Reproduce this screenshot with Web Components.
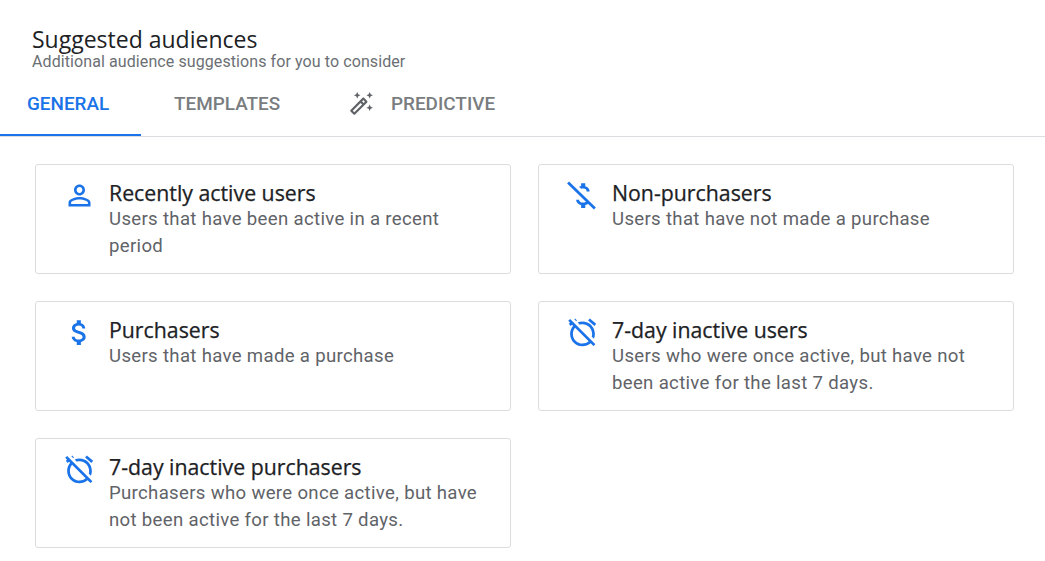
<!DOCTYPE html>
<html><head><meta charset="utf-8">
<style>
html,body{margin:0;padding:0;background:#fff;font-family:Roboto,"Liberation Sans",sans-serif}
</style></head><body>
<audience-page>
  <audience-header slot="header" title-text="Suggested audiences" sub="Additional audience suggestions for you to consider"></audience-header>
  <audience-tabs slot="tabs"></audience-tabs>
  <audience-card icon="person" heading="Recently active users">Users that have been active in a recent period</audience-card>
  <audience-card icon="moneyoff" heading="Non-purchasers">Users that have not made a purchase</audience-card>
  <audience-card icon="money" heading="Purchasers">Users that have made a purchase</audience-card>
  <audience-card icon="alarmoff" heading="7-day inactive users">Users who were once active, but have not been active for the last 7 days.</audience-card>
  <audience-card icon="alarmoff" heading="7-day inactive purchasers">Purchasers who were once active, but have not been active for the last 7 days.</audience-card>
</audience-page>
<script>
const ICONS={
person:'M12 5.9c1.16 0 2.1.94 2.1 2.1s-.94 2.1-2.1 2.1S9.9 9.16 9.9 8s.94-2.1 2.1-2.1m0 9c2.97 0 6.1 1.46 6.1 2.1v1.1H5.9V17c0-.64 3.13-2.1 6.1-2.1M12 4C9.79 4 8 5.79 8 8s1.79 4 4 4 4-1.79 4-4-1.79-4-4-4zm0 9c-2.67 0-8 1.34-8 4v3h16v-3c0-2.66-5.33-4-8-4z',
money:'M11.8 10.9c-2.27-.59-3-1.2-3-2.15 0-1.09 1.01-1.85 2.7-1.85 1.78 0 2.44.85 2.5 2.1h2.21c-.07-1.72-1.12-3.3-3.21-3.81V3h-3v2.16c-1.94.42-3.5 1.68-3.5 3.61 0 2.31 1.91 3.46 4.7 4.13 2.5.6 3 1.48 3 2.41 0 .69-.49 1.79-2.7 1.79-2.06 0-2.87-.92-2.98-2.1h-2.2c.12 2.19 1.76 3.42 3.68 3.83V21h3v-2.15c1.95-.37 3.5-1.5 3.5-3.55 0-2.84-2.43-3.81-4.7-4.4z',
moneyoff:'M12.5 6.9c1.78 0 2.44.85 2.5 2.1h2.21c-.07-1.72-1.12-3.3-3.21-3.81V3h-3v2.16c-.53.12-1.03.3-1.48.54l1.47 1.47c.41-.17.91-.27 1.51-.27zM14.92 16.19c-.34.48-1.05.91-2.42.91-2.06 0-2.87-.92-2.98-2.1h-2.2c.12 2.19 1.76 3.42 3.68 3.83V21h3v-2.15c.96-.18 1.82-.55 2.45-1.12zM2.2 1.9L.8 3.3 20.3 22.1l1.4-1.4z',
alarmoff:'M10.04 6.29C10.66 6.11 11.32 6 12 6c3.86 0 7 3.14 7 7 0 .68-.11 1.34-.29 1.96l1.56 1.56c.47-1.08.73-2.27.73-3.52 0-4.97-4.03-9-9-9-1.25 0-2.44.26-3.53.72l1.57 1.57zm7.297-4.48l4.607 3.845-1.28 1.535-4.61-3.843zM3.02 2.1L1.61 3.51l1.37 1.37-.92.77 1.28 1.54 1.06-.88.8.8C3.83 8.69 3 10.75 3 13c0 4.97 4.03 9 9 9 2.25 0 4.31-.83 5.89-2.2l2.1 2.1 1.41-1.41L3.02 2.1zM12 20c-3.86 0-7-3.14-7-7 0-1.7.61-3.26 1.62-4.47l9.85 9.85C15.26 19.39 13.7 20 12 20zM7.48 3.73l.46-.38-1.28-1.54-.6.5z',
wand:'M20 7l.94-2.06L23 4l-2.06-.94L20 1l-.94 2.06L17 4l2.06.94zM8.5 7l.94-2.06L11.5 4l-2.06-.94L8.5 1l-.94 2.06L5.5 4l2.06.94zM20 12.5l-.94 2.06-2.06.94 2.06.94.94 2.06.94-2.06L23 15.5l-2.06-.94zm-2.29-3.38l-2.83-2.83c-.2-.19-.45-.29-.71-.29-.26 0-.51.1-.71.29L2.29 17.46c-.39.39-.39 1.02 0 1.41l2.83 2.83c.2.2.45.3.71.3s.51-.1.71-.29l11.17-11.17c.39-.39.39-1.03 0-1.42zm-3.54-.7l1.41 1.41L14.41 11 13 9.59l1.17-1.17zM5.83 19.59l-1.41-1.41L11.59 11 13 12.41l-7.17 7.18z'
};
function svg(name,color,size){return `<svg width="${size}" height="${size}" viewBox="0 0 24 24" fill="${color}" aria-hidden="true"><path d="${ICONS[name]}"/></svg>`}
class Base extends HTMLElement{
  constructor(){super();this.attachShadow({mode:'open'})}
}
customElements.define('audience-page',class extends Base{
  constructor(){super();this.shadowRoot.innerHTML=`<style>
  :host{display:block;width:1045px;height:561px;overflow:hidden;background:#fff}
  .grid{display:grid;grid-template-columns:476px 476px;column-gap:27px;row-gap:27px;grid-auto-rows:110px;padding:27px 0 0 35px}
  </style><slot name="header"></slot><slot name="tabs"></slot><div class="grid"><slot></slot></div>`}
});
customElements.define('audience-header',class extends Base{
  connectedCallback(){this.shadowRoot.innerHTML=`<style>
  :host{display:block;padding:26px 0 0 32px;height:80px;box-sizing:border-box}
  .t{font:400 23px/26px "Open Sans",Roboto,sans-serif;color:#202124}
  .s{font:400 16px/18px Roboto,sans-serif;color:#6b6f74;letter-spacing:.09px;margin-top:1px}
  </style><div class="t">${this.getAttribute('title-text')}</div><div class="s">${this.getAttribute('sub')}</div>`}
});
customElements.define('audience-tabs',class extends Base{
  constructor(){super();this.shadowRoot.innerHTML=`<style>
  :host{display:flex;height:57px;box-sizing:border-box;border-bottom:1px solid #dadce0;font:500 18.9px/20px Roboto,sans-serif;color:#7a7d80}
  .tab{display:flex;align-items:center;height:56px;box-sizing:border-box;padding-bottom:9px}
  .a{width:141px;padding-left:27px;color:#1a73e8;border-bottom:2px solid #1a73e8;padding-bottom:7px}
  .b{padding-left:33px;width:207px}
  .c{gap:17px}
  svg{display:block}
  </style><div class="tab a">GENERAL</div><div class="tab b">TEMPLATES</div><div class="tab c">${svg('wand','#5f6368',26)}<span>PREDICTIVE</span></div>`}
});
customElements.define('audience-card',class extends Base{
  connectedCallback(){this.shadowRoot.innerHTML=`<style>
  :host{display:flex;box-sizing:border-box;border:1px solid #dadce0;border-radius:3px;padding:16px 0 0 27px;gap:13px;background:#fff}
  .i{flex:none;width:33px;height:33px;margin-top:-2.5px}
  svg{display:block}
  .x{width:375px}
  h3{margin:-1px 0 1px;font:500 21.3px/25px "Open Sans",Roboto,sans-serif;color:#202124;-webkit-text-stroke:.25px #202124}
  p{margin:0;font:400 18.6px/27px Roboto,sans-serif;color:#5f6368;letter-spacing:.32px}
  </style><div class="i">${svg(this.getAttribute('icon'),'#1a73e8',33)}</div><div class="x"><h3>${this.getAttribute('heading')}</h3><p><slot></slot></p></div>`}
});
</script>
</body></html>
